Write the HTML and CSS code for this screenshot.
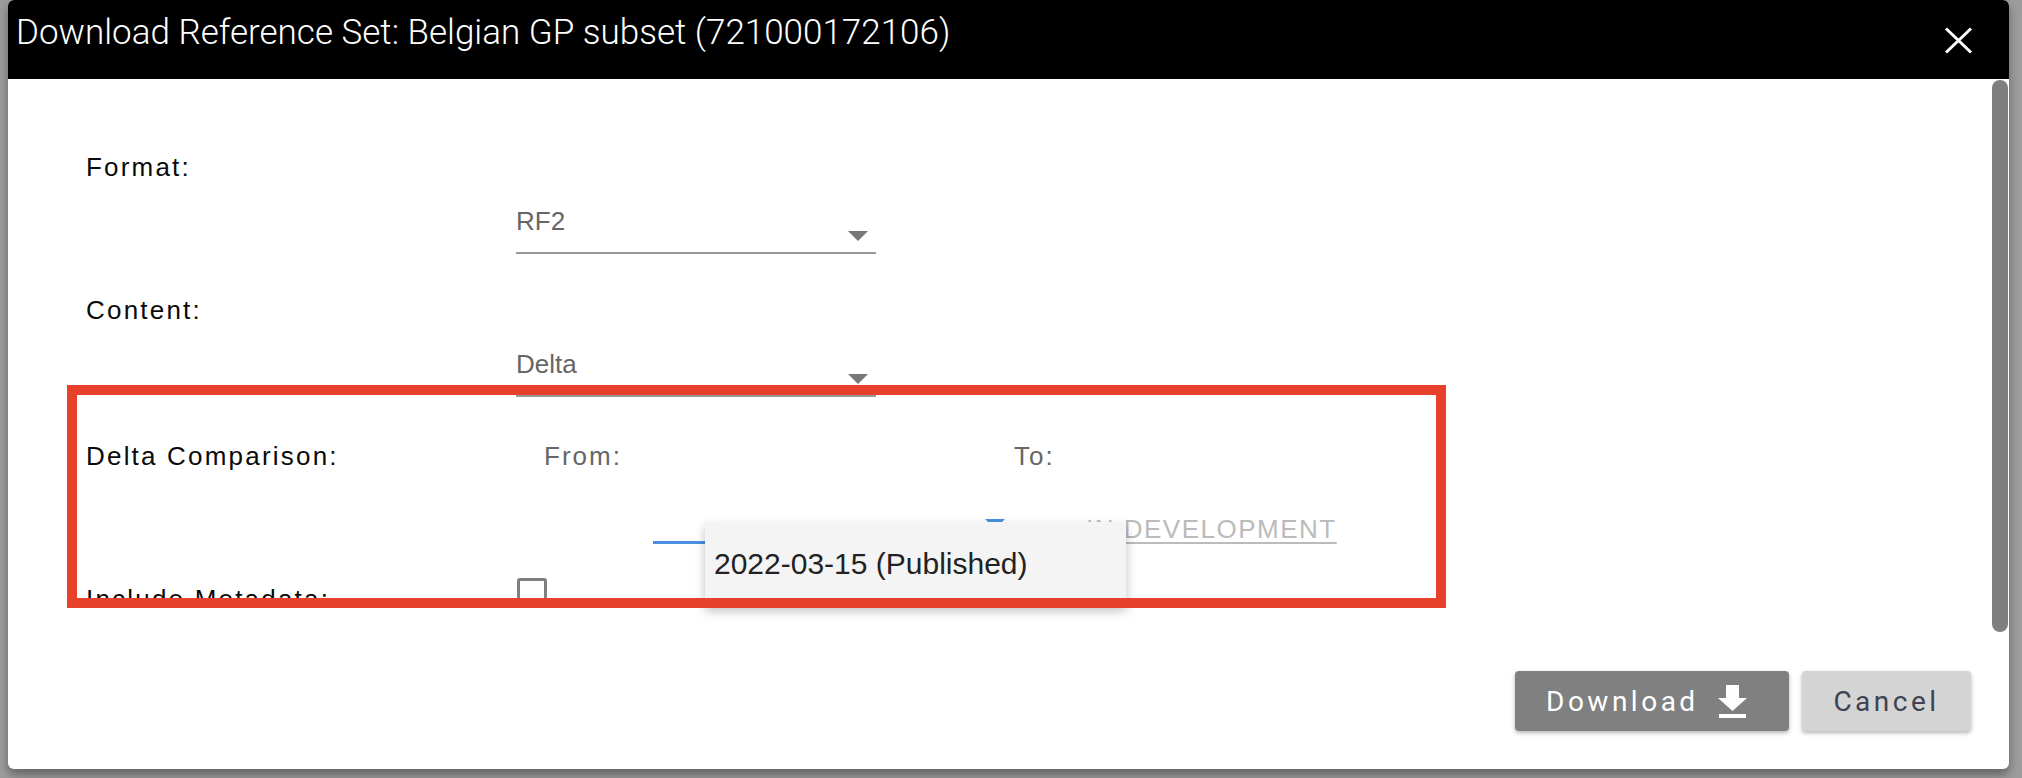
FILE: index.html
```html
<!DOCTYPE html>
<html lang="en">
  <head>
    <meta charset="UTF-8" />
    <meta name="viewport" content="width=device-width, initial-scale=1.0" />
    <title>Download Reference Set</title>
    <link rel="stylesheet" href="styles.css">
  </head>
  <body>
    <div class="dialog">
      <div class="dialog-header">
        <h1 class="dialog-title">Download Reference Set: Belgian GP subset (721000172106)</h1>
        <button class="dialog-close" type="button">
          <svg width="29" height="27" viewBox="0 0 29 27">
            <path d="M2 1.5 L27 25.5 M27 1.5 L2 25.5" stroke="white" stroke-width="3" fill="none" />
          </svg>
        </button>
      </div>

      <div class="dialog-body">
        <div class="form-row">
          <label class="form-label">Format:</label>
          <div class="form-control">
            <div class="select">
              <span class="select-value">RF2</span>
              <span class="select-arrow"></span>
            </div>
          </div>
        </div>

        <div class="form-row">
          <label class="form-label">Content:</label>
          <div class="form-control">
            <div class="select">
              <span class="select-value">Delta</span>
              <span class="select-arrow"></span>
            </div>
          </div>
        </div>

        <div class="form-row form-row-delta">
          <label class="form-label">Delta Comparison:</label>
          <div class="delta">
            <span class="delta-label">From:</span>
            <span class="delta-label">To:</span>
            <div class="select select-focused">
              <span class="select-value"></span>
              <span class="select-arrow"></span>
            </div>
            <a class="delta-link">IN DEVELOPMENT</a>
          </div>
        </div>

        <div class="form-row form-row-check">
          <label class="form-label">Include Metadata:</label>
          <span class="checkbox"></span>
        </div>
      </div>

      <div class="dialog-footer">
        <button class="button-download" type="button">
          Download
          <svg width="29" height="33" viewBox="0 0 29 33">
            <rect x="8" y="0" width="13" height="14" fill="white" />
            <polygon points="0,13 29,13 14.5,26" fill="white" />
            <rect x="1" y="29" width="27" height="4" fill="white" />
          </svg>
        </button>
        <button class="button-cancel" type="button">Cancel</button>
      </div>

      <div class="dialog-scrollbar"></div>

      <!-- open dropdown of the From select -->
      <div class="option-panel">
        <div class="option">2022-03-15 (Published)</div>
      </div>

      <!-- annotation -->
      <div class="highlight-box"></div>
    </div>
  </body>
</html>
```

FILE: styles.css
```css
* {
  margin: 0;
  padding: 0;
  box-sizing: border-box;
}

body {
  background: #9c9c9c;
  font-family: "Liberation Sans", Arial, sans-serif;
  height: 778px;
  overflow: hidden;
}

.dialog {
  position: relative;
  width: 2001px;
  height: 769px;
  margin-left: 8px;
  background: white;
  border-radius: 6px;
  box-shadow: 0 6px 10px rgba(0, 0, 0, 0.35);
}

.dialog-header {
  height: 79px;
  background: black;
  color: white;
  display: flex;
  justify-content: space-between;
  align-items: flex-start;
  padding: 15px 36px 0 8px;
  border-radius: 6px 6px 0 0;
}

.dialog-title {
  font-family: Roboto, sans-serif;
  font-weight: 300;
  font-size: 35px;
  line-height: 35px;
}

.dialog-close {
  background: none;
  border: none;
  margin-top: 12px;
  width: 29px;
  height: 27px;
  display: flex;
}

.dialog-body {
  height: 531px;
  overflow: hidden;
  padding: 73px 0 0 78px;
}

.form-row {
  display: flex;
  align-items: flex-start;
}

.form-row + .form-row {
  margin-top: 41px;
}

.form-row-delta {
  margin-top: 44px !important;
}

.form-row-check {
  margin-top: 34px !important;
}

.form-label {
  width: 430px;
  font-size: 26px;
  line-height: 30px;
  letter-spacing: 2.2px;
  color: #0a0a0a;
}

.form-row-check .form-label {
  padding-top: 6px;
}

.form-control {
  padding-top: 54px;
}

.select {
  position: relative;
  width: 360px;
  padding-bottom: 16px;
  border-bottom: 2px solid #999;
}

.select-value {
  display: block;
  height: 30px;
  font-size: 26px;
  line-height: 30px;
  color: #666;
}

.select-arrow {
  position: absolute;
  right: 8px;
  top: 25px;
  border-left: 10px solid transparent;
  border-right: 10px solid transparent;
  border-top: 10px solid #777;
}

.select-focused {
  border-bottom: 3px solid #4a90e2;
  margin: 23px 0 0 109px;
}

.select-focused .select-arrow {
  border-top-color: #4a90e2;
}

.delta {
  display: grid;
  grid-template-columns: 470px auto;
  margin-left: 28px;
}

.delta-label {
  font-size: 26px;
  line-height: 30px;
  letter-spacing: 2px;
  color: #666;
}

.delta-link {
  margin: 43px 0 0 72px;
  font-size: 26px;
  line-height: 30px;
  letter-spacing: 1.5px;
  color: #bbb;
  text-decoration: underline;
  text-underline-offset: 4px;
}

.checkbox {
  width: 30px;
  height: 30px;
  margin-left: 1px;
  border: 3px solid #7f7f7f;
  border-radius: 3px;
}

.dialog-footer {
  display: flex;
  justify-content: flex-end;
  gap: 13px;
  padding: 61px 38px 0 0;
}

.button-download,
.button-cancel {
  height: 60px;
  border: none;
  border-radius: 4px;
  font-family: Roboto, sans-serif;
  font-size: 28px;
  letter-spacing: 3.5px;
  box-shadow: 0 2px 4px rgba(0, 0, 0, 0.3);
  display: flex;
  align-items: center;
}

.button-download {
  width: 274px;
  padding-left: 31px;
  background: #808080;
  color: white;
}

.button-download svg {
  margin-left: 19px;
}

.button-cancel {
  width: 169px;
  justify-content: center;
  background: #d4d4d4;
  color: #3d4352;
}

.dialog-scrollbar {
  position: absolute;
  left: 1984px;
  top: 80px;
  width: 16px;
  height: 552px;
  border-radius: 8px;
  background: #7f7f7f;
}

.option-panel {
  position: absolute;
  left: 697px;
  top: 522px;
  width: 421px;
  height: 84px;
  background: #f4f4f4;
  box-shadow: 0 5px 10px rgba(0, 0, 0, 0.25);
}

.option {
  padding: 27px 0 0 9px;
  font-size: 30px;
  line-height: 30px;
  color: #222;
}

.highlight-box {
  position: absolute;
  left: 59px;
  top: 385px;
  width: 1379px;
  height: 223px;
  border: 10px solid #e8412b;
}
```
